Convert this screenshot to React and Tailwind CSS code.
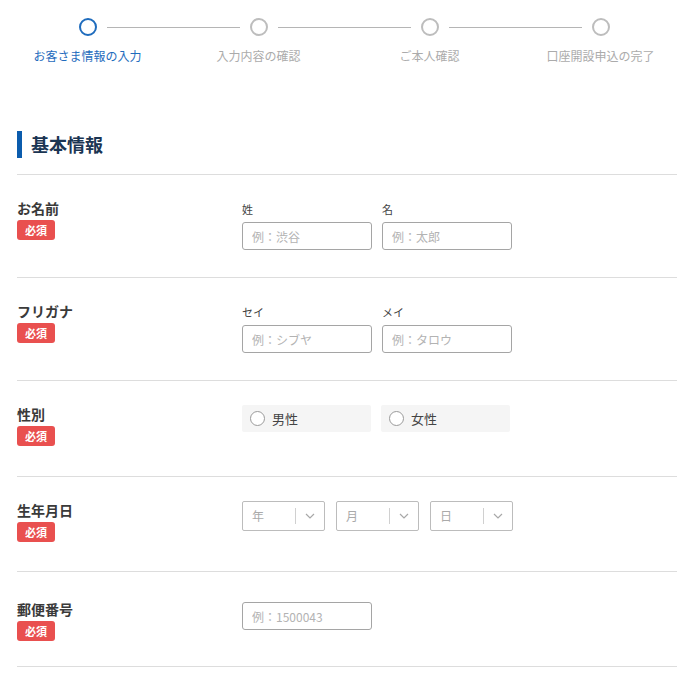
import React from 'react';

const steps = ['お客さま情報の入力', '入力内容の確認', 'ご本人確認', '口座開設申込の完了'];

// ==================================================
// STEPPER
// ==================================================
const Stepper = () => (
  <div className="grid grid-cols-4 px-[2px]">
    {steps.map((label, i) => (
      <div key={label} className="relative flex flex-col items-center">
        <div
          className={
            i === 0
              ? 'mt-[18px] w-[18px] h-[18px] rounded-full border-2 border-[#1f6cbd]'
              : 'mt-[18px] w-[18px] h-[18px] rounded-full border-2 border-[#bdbdbd]'
          }
        />
        {i < steps.length - 1 && (
          <div className="absolute top-[27px] left-[calc(50%+19px)] right-[calc(-50%+19px)] h-px bg-[#b5b5b5]" />
        )}
        <span
          className={
            i === 0
              ? 'mt-[11px] text-[12px] leading-[18px] text-[#1f6cbd]'
              : 'mt-[11px] text-[12px] leading-[18px] text-[#ababab]'
          }
        >
          {label}
        </span>
      </div>
    ))}
  </div>
);

const Badge = () => (
  <span className="mt-[2px] w-[38px] h-[20px] rounded-[3px] bg-[#e9504f] text-white text-[11px] font-bold flex items-center justify-center">
    必須
  </span>
);

const Row = ({ label, children, pt = 'pt-[23px]', pb = 'pb-[30px]' }) => (
  <div className={`flex border-t border-[#dddddd] ${pt} ${pb}`}>
    <div className="w-[225px] shrink-0 flex flex-col items-start">
      <span className="text-[14px] leading-[20px] font-bold text-[#3a3a3a]">{label}</span>
      <Badge />
    </div>
    <div className="flex-1">{children}</div>
  </div>
);

const TextInput = ({ placeholder, className = '' }) => (
  <input
    type="text"
    placeholder={placeholder}
    className={`w-[130px] h-[28px] rounded-[3px] border border-[#a5a5a5] px-[9px] text-[12px] text-[#333] placeholder:text-[#b3b3b3] outline-none ${className}`}
  />
);

const Named = ({ label, placeholder }) => (
  <div className="flex flex-col">
    <span className="mt-[3px] mb-[5px] text-[11px] leading-[16px] text-[#444]">{label}</span>
    <TextInput placeholder={placeholder} />
  </div>
);

const Radio = ({ label }) => (
  <label className="w-[129px] h-[27px] bg-[#f5f5f5] rounded-[2px] flex items-center pl-[8px] gap-[7px]">
    <span className="w-[15px] h-[15px] rounded-full border border-[#9a9a9a] bg-white" />
    <span className="text-[13px] text-[#444]">{label}</span>
  </label>
);

const Select = ({ label }) => (
  <div className="w-[83px] h-[30px] rounded-[2px] border border-[#bcbcbc] flex items-center">
    <span className="pl-[9px] flex-1 text-[12px] text-[#aaaaaa]">{label}</span>
    <span className="w-px h-[16px] bg-[#d0d0d0]" />
    <span className="w-[28px] flex items-center justify-center">
      <svg width="10" height="6" viewBox="0 0 10 6" fill="none">
        <polyline points="1,1 5,5 9,1" stroke="#a8a8a8" strokeWidth="1.2" />
      </svg>
    </span>
  </div>
);

const App = () => {
  return (
    <div className="min-h-screen bg-white font-['Noto_Sans_CJK_JP','Noto_Sans',sans-serif]">
      <Stepper />

      <div className="pl-[17px] pr-[11px]">
        {/* Section heading */}
        <div className="mt-[66px] pb-[16px] flex items-center gap-[9px]">
          <span className="w-[5px] h-[27px] bg-[#0b5cad]" />
          <h2 className="text-[18px] font-bold text-[#1b3553]">基本情報</h2>
        </div>

        <Row label="お名前" pb="pb-[27px]">
          <div className="flex gap-[10px]">
            <Named label="姓" placeholder="例：渋谷" />
            <Named label="名" placeholder="例：太郎" />
          </div>
        </Row>

        <Row label="フリガナ" pb="pb-[27px]">
          <div className="flex gap-[10px]">
            <Named label="セイ" placeholder="例：シブヤ" />
            <Named label="メイ" placeholder="例：タロウ" />
          </div>
        </Row>

        <Row label="性別">
          <div className="mt-[1px] flex gap-[10px]">
            <Radio label="男性" />
            <Radio label="女性" />
          </div>
        </Row>

        <Row label="生年月日" pb="pb-[29px]">
          <div className="mt-[1px] flex gap-[11px]">
            <Select label="年" />
            <Select label="月" />
            <Select label="日" />
          </div>
        </Row>

        <Row label="郵便番号" pt="pt-[27px]" pb="pb-[25px]">
          <TextInput placeholder="例：1500043" className="mt-[3px]" />
        </Row>

        <div className="border-t border-[#dddddd]" />
      </div>
    </div>
  );
};

export default App;
